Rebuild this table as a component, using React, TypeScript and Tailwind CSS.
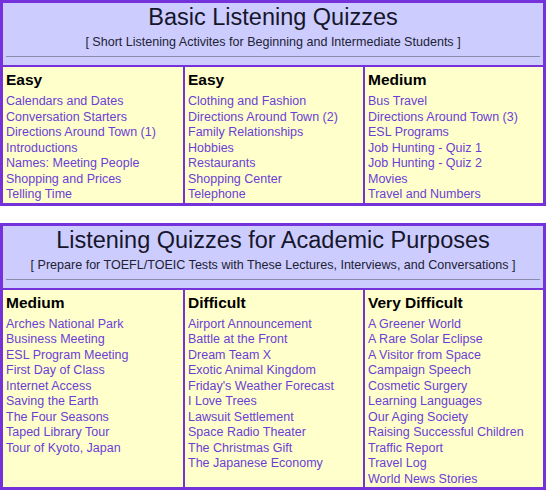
const basic = [
  {
    level: "Easy",
    links: [
      "Calendars and Dates",
      "Conversation Starters",
      "Directions Around Town (1)",
      "Introductions",
      "Names: Meeting People",
      "Shopping and Prices",
      "Telling Time",
    ],
  },
  {
    level: "Easy",
    links: [
      "Clothing and Fashion",
      "Directions Around Town (2)",
      "Family Relationships",
      "Hobbies",
      "Restaurants",
      "Shopping Center",
      "Telephone",
    ],
  },
  {
    level: "Medium",
    links: [
      "Bus Travel",
      "Directions Around Town (3)",
      "ESL Programs",
      "Job Hunting - Quiz 1",
      "Job Hunting - Quiz 2",
      "Movies",
      "Travel and Numbers",
    ],
  },
];

const academic = [
  {
    level: "Medium",
    links: [
      "Arches National Park",
      "Business Meeting",
      "ESL Program Meeting",
      "First Day of Class",
      "Internet Access",
      "Saving the Earth",
      "The Four Seasons",
      "Taped Library Tour",
      "Tour of Kyoto, Japan",
    ],
  },
  {
    level: "Difficult",
    links: [
      "Airport Announcement",
      "Battle at the Front",
      "Dream Team X",
      "Exotic Animal Kingdom",
      "Friday's Weather Forecast",
      "I Love Trees",
      "Lawsuit Settlement",
      "Space Radio Theater",
      "The Christmas Gift",
      "The Japanese Economy",
    ],
  },
  {
    level: "Very Difficult",
    links: [
      "A Greener World",
      "A Rare Solar Eclipse",
      "A Visitor from Space",
      "Campaign Speech",
      "Cosmetic Surgery",
      "Learning Languages",
      "Our Aging Society",
      "Raising Successful Children",
      "Traffic Report",
      "Travel Log",
      "World News Stories",
    ],
  },
];

function QuizBox(props: {
  title: string;
  subtitle: string;
  columns: { level: string; links: string[] }[];
}) {
  const { title, subtitle, columns } = props;

  return (
    <div className="w-[546px] border-[3px] border-[#7632da]">
      <div className="bg-[#ccccff] px-[3px] pb-[8px] text-center">
        <h1 className="text-[23.5px] leading-[28px] text-[#16162a]">{title}</h1>
        <p className="mt-[3px] text-[12.55px] leading-[16px] text-[#222233]">{subtitle}</p>
        <div className="mt-[6px] h-px bg-[#8c8caa]" />
      </div>
      <div className="grid grid-cols-3 border-t-2 border-[#7632da] bg-[#ffffcc]">
        {columns.map((col, i) => (
          <div
            key={i}
            className={"px-[3px] pt-[2px] " + (i > 0 ? "border-l-2 border-[#7632da]" : "")}
          >
            <h2 className="mb-[3px] text-[15.5px] font-bold leading-[22px] text-black">
              {col.level}
            </h2>
            {col.links.map((link) => (
              <a
                key={link}
                href="#"
                className="block text-[12.5px] leading-[15.5px] text-[#6b3ed6]"
              >
                {link}
              </a>
            ))}
          </div>
        ))}
      </div>
    </div>
  );
}

export default function App() {
  return (
    <div className="h-[492px] w-[550px] bg-white font-['Liberation_Sans',Arial,sans-serif]">
      <QuizBox
        title="Basic Listening Quizzes"
        subtitle="[ Short Listening Activites for Beginning and Intermediate Students ]"
        columns={basic}
      />
      <div className="h-[17px]" />
      <QuizBox
        title="Listening Quizzes for Academic Purposes"
        subtitle="[ Prepare for TOEFL/TOEIC Tests with These Lectures, Interviews, and Conversations ]"
        columns={academic}
      />
    </div>
  );
}
